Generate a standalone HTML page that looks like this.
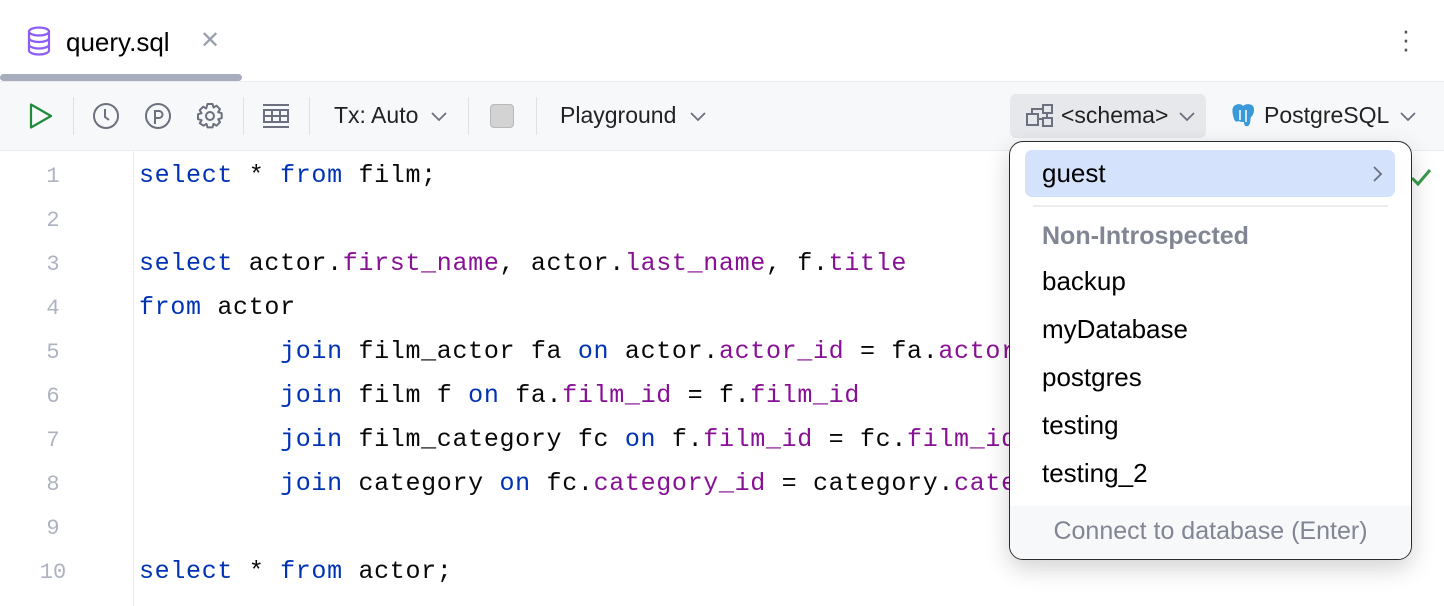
<!DOCTYPE html>
<html><head><meta charset="utf-8"><style>
*{margin:0;padding:0;box-sizing:border-box}
body{width:1444px;height:606px;background:#fff;position:relative;overflow:hidden;font-family:"Liberation Sans",sans-serif;color:#000}
.abs{position:absolute}
.ui{font-size:23px;color:#222;white-space:nowrap}
.code{position:absolute;left:139px;font-family:"Liberation Mono",monospace;font-size:25px;letter-spacing:0.67px;white-space:pre;color:#080808;line-height:44px}
.ln{position:absolute;width:62px;left:22px;text-align:center;font-family:"Liberation Mono",monospace;font-size:22px;color:#aeb3c1;line-height:44px}
.k{color:#0033b3}.p{color:#871094}
.sep{position:absolute;top:97px;width:1px;height:38px;background:#dfe1e5}
.item{position:absolute;left:1042px;font-size:26px;color:#000}
</style></head><body>
<svg class="abs" style="left:26px;top:26px" width="26" height="30" viewBox="0 0 26 30"><g fill="none" stroke="#8b5cf6" stroke-width="2.2"><ellipse cx="13" cy="5.5" rx="10" ry="4"/><path d="M3 5.5v19c0 2.2 4.5 4 10 4s10-1.8 10-4v-19M3 12c0 2.2 4.5 4 10 4s10-1.8 10-4M3 18.5c0 2.2 4.5 4 10 4s10-1.8 10-4"/></g></svg>
<div class="abs ui" style="left:66px;top:27px;font-size:26px;color:#000">query.sql</div>
<div class="abs" style="left:200px;top:26px;font-size:24px;color:#9aa0ad">✕</div>
<div class="abs" style="left:1401px;top:26px;font-size:26px;color:#555;line-height:9px;width:10px;text-align:center">·<br>·<br>·</div>
<div class="abs" style="left:0;top:74px;width:242px;height:7px;border-radius:4px;background:#a7adbd"></div>
<div class="abs" style="left:0;top:81px;width:1444px;height:70px;background:#f7f8fa;border-top:1px solid #ebecf0;border-bottom:1px solid #ebecf0"></div>
<svg class="abs" style="left:28px;top:102px" width="26" height="28"><path d="M3 2.5L23 14L3 25.5Z" fill="none" stroke="#208a3c" stroke-width="2.2" stroke-linejoin="round"/></svg>
<div class="sep" style="left:73px"></div>
<svg class="abs" style="left:92px;top:102px" width="28" height="28"><circle cx="14" cy="14" r="12" fill="none" stroke="#6c707e" stroke-width="2"/><path d="M13 7v8l4 3" fill="none" stroke="#6c707e" stroke-width="2"/></svg>
<svg class="abs" style="left:144px;top:102px" width="28" height="28"><circle cx="14" cy="14" r="12" fill="none" stroke="#6c707e" stroke-width="2"/><path d="M11 22V9h4a3.5 3.5 0 010 7h-4" fill="none" stroke="#6c707e" stroke-width="2"/></svg>
<svg class="abs" style="left:195px;top:101px" width="30" height="30" viewBox="0 0 30 30"><path d="M12.5 3h5l1 3.5 3-1.8 3.5 3.5-1.8 3 3.5 1v5l-3.5 1 1.8 3-3.5 3.5-3-1.8-1 3.5h-5l-1-3.5-3 1.8L4.8 22.2l1.8-3L3 18.2v-5l3.5-1-1.8-3L8.2 5.7l3 1.8z" fill="none" stroke="#6c707e" stroke-width="2" stroke-linejoin="round"/><circle cx="15" cy="15" r="4" fill="none" stroke="#6c707e" stroke-width="2"/></svg>
<div class="sep" style="left:243px"></div>
<svg class="abs" style="left:261px;top:103px" width="30" height="26"><path d="M2 2h26M2 24h26" stroke="#6c707e" stroke-width="2"/><rect x="3" y="7" width="24" height="12" fill="none" stroke="#6c707e" stroke-width="2"/><path d="M3 13h24M11 7v12M19 7v12" stroke="#6c707e" stroke-width="2"/></svg>
<div class="sep" style="left:309px"></div>
<div class="abs ui" style="left:334px;top:102px">Tx: Auto</div>
<svg class="abs" style="left:430px;top:110px" width="18" height="12"><path d="M2 3l7 7 7-7" fill="none" stroke="#6c707e" stroke-width="1.8"/></svg>
<div class="sep" style="left:468px"></div>
<div class="abs" style="left:490px;top:104px;width:24px;height:24px;border-radius:4px;background:#d3d3d3;border:1px solid #b8b8b8"></div>
<div class="sep" style="left:536px"></div>
<div class="abs ui" style="left:560px;top:102px">Playground</div>
<svg class="abs" style="left:689px;top:110px" width="18" height="12"><path d="M2 3l7 7 7-7" fill="none" stroke="#6c707e" stroke-width="1.8"/></svg>
<div class="abs" style="left:1010px;top:94px;width:196px;height:44px;border-radius:6px;background:#e7e8eb"></div>
<svg class="abs" style="left:1026px;top:103px" width="28" height="26"><g fill="none" stroke="#6c707e" stroke-width="2"><rect x="1" y="11" width="11" height="11"/><rect x="17" y="2" width="9" height="8"/><rect x="17" y="15" width="9" height="8"/><path d="M12 16h5M21 10v5M6 11V6h11"/></g></svg>
<div class="abs ui" style="left:1061px;top:102px">&lt;schema&gt;</div>
<svg class="abs" style="left:1178px;top:110px" width="18" height="12"><path d="M2 3l7 7 7-7" fill="none" stroke="#6c707e" stroke-width="1.8"/></svg>
<svg class="abs" style="left:1230px;top:102px" width="26" height="28" viewBox="0 0 26 28"><path d="M4 4c3-3 8-2 9 0 2-2 7-3 10 0 2 3 1 9-2 11-1 3 0 7-3 9-3 1-4-1-4-4-2 0-4 0-5-1-2 1-4 1-5-2-1-4-3-10 0-13z" fill="#3a9ad9"/><path d="M10 8v10M16 8v12" stroke="#fff" stroke-width="1.5" fill="none"/></svg>
<div class="abs ui" style="left:1264px;top:102px">PostgreSQL</div>
<svg class="abs" style="left:1399px;top:110px" width="18" height="12"><path d="M2 3l7 7 7-7" fill="none" stroke="#6c707e" stroke-width="1.8"/></svg>
<div class="abs" style="left:133px;top:151px;width:1px;height:455px;background:#ebecf0"></div>
<div class="ln" style="top:155px">1<br>2<br>3<br>4<br>5<br>6<br>7<br>8<br>9<br>10</div>
<div class="code" style="top:154px"><span class="k">select</span> * <span class="k">from</span> film;

<span class="k">select</span> actor.<span class="p">first_name</span>, actor.<span class="p">last_name</span>, f.<span class="p">title</span>
<span class="k">from</span> actor
         <span class="k">join</span> film_actor fa <span class="k">on</span> actor.<span class="p">actor_id</span> = fa.<span class="p">actor_id</span>
         <span class="k">join</span> film f <span class="k">on</span> fa.<span class="p">film_id</span> = f.<span class="p">film_id</span>
         <span class="k">join</span> film_category fc <span class="k">on</span> f.<span class="p">film_id</span> = fc.<span class="p">film_id</span>
         <span class="k">join</span> category <span class="k">on</span> fc.<span class="p">category_id</span> = category.<span class="p">category_id</span>

<span class="k">select</span> * <span class="k">from</span> actor;</div>
<svg class="abs" style="left:1410px;top:166px" width="22" height="22"><path d="M2 12l6 6 12-14" fill="none" stroke="#3a9a4a" stroke-width="3"/></svg>
<div class="abs" style="left:1009px;top:141px;width:403px;height:419px;background:#fff;border:1px solid #2b2b2b;border-radius:14px;box-shadow:0 8px 24px rgba(0,0,0,.18);overflow:hidden">
<div class="abs" style="left:0;top:364px;width:403px;height:55px;background:#f7f8fa"></div>
</div>
<div class="abs" style="left:1025px;top:150px;width:370px;height:47px;background:#d4e2fc;border-radius:7px"></div>
<div class="item" style="top:158px">guest</div>
<svg class="abs" style="left:1371px;top:164px" width="14" height="20"><path d="M3 3l7 7-7 7" fill="none" stroke="#6c707e" stroke-width="1.8"/></svg>
<div class="abs" style="left:1033px;top:205px;width:355px;height:2px;background:#ebecf0"></div>
<div class="item" style="top:222px;font-size:25px;font-weight:bold;color:#818594">Non-Introspected</div>
<div class="item" style="top:266px">backup</div>
<div class="item" style="top:314px">myDatabase</div>
<div class="item" style="top:362px">postgres</div>
<div class="item" style="top:410px">testing</div>
<div class="item" style="top:458px">testing_2</div>
<div class="abs" style="left:1009px;top:517px;width:403px;text-align:center;font-size:25px;color:#818594">Connect to database (Enter)</div>
</body></html>
